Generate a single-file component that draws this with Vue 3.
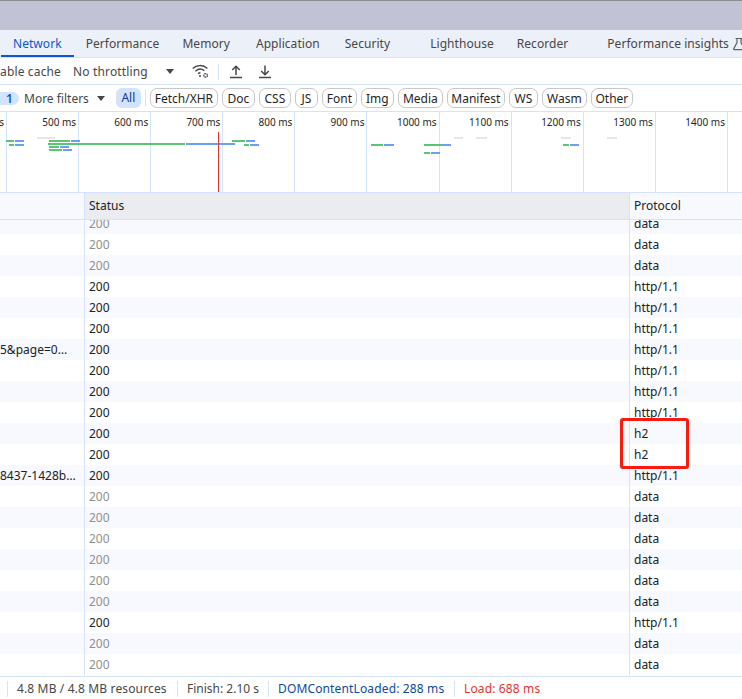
<template>
  <div class="devtools">
    <div class="titlebar"></div>

    <div class="tabs">
      <div v-for="t in tabs" :key="t.name" class="tab" :class="{ active: t.active }" :style="{ marginLeft: t.gap + 'px' }">{{ t.name }}</div>
      <svg class="flask" width="14" height="14" viewBox="0 0 14 14" fill="none" stroke="#5f6368" stroke-width="1.2">
        <path d="M3.5 1.5h7M5 1.5v4L1.8 11.6c-.3.6.1 1.1.7 1.1h9c.6 0 1-.5.7-1.1L9 5.5v-4" />
      </svg>
    </div>

    <div class="toolbar">
      <span class="cache">able cache</span>
      <span class="throttle">No throttling</span>
      <span class="caret caret-a"></span>
      <svg class="wifi" width="17" height="15" viewBox="0 0 17 15" fill="none" stroke="#474747" stroke-width="1.4">
        <path d="M.8 4.6C4.8 .6 11.2 .6 15.4 4.4" />
        <path d="M3.4 7.2c2.6-2.4 6.2-2.6 9-.6" />
        <path d="M6 9.6c.8-.6 1.6-.9 2.4-.9" />
        <circle cx="8" cy="12" r="1" fill="#474747" stroke="none" />
        <circle cx="13.6" cy="11.4" r="1.8" stroke-width="1.3" stroke-dasharray="1.6 .5" />
      </svg>
      <span class="sep"></span>
      <svg class="up" width="14" height="14" viewBox="0 0 14 14" fill="none" stroke="#474747" stroke-width="1.5">
        <path d="M7 10V1.5M3.2 5 7 1.2 10.8 5M1 12.6h12" />
      </svg>
      <svg class="down" width="14" height="14" viewBox="0 0 14 14" fill="none" stroke="#474747" stroke-width="1.5">
        <path d="M7 .6v9M3.2 6 7 9.8 10.8 6M1 12.6h12" />
      </svg>
    </div>

    <div class="filters">
      <span class="count">1</span>
      <span class="more">More filters</span>
      <span class="caret caret-b"></span>
      <span class="all">All</span>
      <span class="sep sep-f"></span>
      <span v-for="c in chips" :key="c.name" class="chip" :style="{ width: c.w + 'px' }">{{ c.name }}</span>
    </div>

    <div class="overview">
      <div class="ticks">
        <div class="tick first">s</div>
        <div v-for="l in ticks" :key="l" class="tick">{{ l }}</div>
      </div>
      <i v-for="(b, i) in bars" :key="i" class="bar" :style="{ left: b[0] + 'px', width: b[1] - b[0] + 'px', top: b[2] + 'px', background: colors[b[3]] }"></i>
      <i class="load-line"></i>
    </div>

    <div class="table-wrap">
      <div class="head">
        <div class="cell c-name"></div>
        <div class="cell c-status sorted">Status</div>
        <div class="cell c-proto">Protocol</div>
      </div>
      <div class="body">
        <div v-for="(r, i) in rows" :key="i" class="row" :class="{ odd: i % 2 === 0 }">
          <div class="cell c-name">{{ r.name }}</div>
          <div class="cell c-status" :class="{ muted: r.proto === 'data' }">200</div>
          <div class="cell c-proto">{{ r.proto }}</div>
        </div>
      </div>
      <div class="highlight"></div>
    </div>

    <div class="status">
      <span class="s-item wide" style="width: 170px">4.8 MB / 4.8 MB resources</span>
      <span class="s-item" style="width: 91px">Finish: 2.10 s</span>
      <span class="s-item wide dcl" style="width: 186px">DOMContentLoaded: 288 ms</span>
      <span class="s-item wide load">Load: 688 ms</span>
    </div>
  </div>
</template>

<script setup>
const tabs = [
  { name: 'Network', active: true, gap: 1 },
  { name: 'Performance', gap: 0 },
  { name: 'Memory', gap: -1 },
  { name: 'Application', gap: 2 },
  { name: 'Security', gap: 1 },
  { name: 'Lighthouse', gap: 16 },
  { name: 'Recorder', gap: -1 },
  { name: 'Performance insights', gap: 15 },
]

const chips = [
  { name: 'Fetch/XHR', w: 68 },
  { name: 'Doc', w: 33 },
  { name: 'CSS', w: 32 },
  { name: 'JS', w: 23 },
  { name: 'Font', w: 35 },
  { name: 'Img', w: 33 },
  { name: 'Media', w: 45 },
  { name: 'Manifest', w: 58 },
  { name: 'WS', w: 29 },
  { name: 'Wasm', w: 45 },
  { name: 'Other', w: 42 },
]

const ticks = ['500 ms', '600 ms', '700 ms', '800 ms', '900 ms', '1000 ms', '1100 ms', '1200 ms', '1300 ms', '1400 ms']

const colors = { g: '#5cc573', b: '#6b9ff5', x: '#e6e6e6' }
// left, right, top inside the overview, colour
const bars = [
  [6, 14, 28, 'g'], [15, 24, 28, 'b'], [9, 14, 32, 'g'], [15, 24, 32, 'b'],
  [49, 70, 28, 'g'], [71, 80, 28, 'b'], [48, 185, 31, 'g'], [186, 235, 31, 'b'],
  [49, 59, 34, 'g'], [60, 69, 34, 'b'], [49, 62, 37, 'g'], [63, 72, 37, 'b'],
  [232, 245, 28, 'g'], [246, 255, 28, 'b'], [244, 249, 32, 'g'], [250, 259, 32, 'b'],
  [371, 383, 32, 'g'], [384, 394, 32, 'b'], [424, 441, 32, 'g'], [441, 451, 32, 'b'],
  [424, 430, 40, 'g'], [431, 440, 40, 'b'], [563, 569, 32, 'g'], [570, 579, 32, 'b'],
  [37, 55, 25, 'x'], [454, 463, 25, 'x'], [476, 487, 25, 'x'], [561, 571, 25, 'x'], [607, 617, 25, 'x'],
]

const proto = 'data data data http http http http http http http h2 h2 http data data data data data data http data data'.split(' ')
const rows = proto.map((p, i) => ({
  proto: p === 'http' ? 'http/1.1' : p,
  name: i === 6 ? '5&page=0…' : i === 12 ? '8437-1428b…' : '',
}))
</script>

<style>
html, body { margin: 0; overflow: hidden; background: #fff; }
</style>

<style scoped>
.devtools {
  position: relative;
  width: 742px;
  height: 699px;
  overflow: hidden;
  background: #fff;
  color: #202124;
  font: 12px/16px "Noto Sans", "Open Sans", sans-serif;
  white-space: nowrap;
  display: flex;
  flex-direction: column;
}
.titlebar {
  height: 30px;
  flex: none;
  background: #c1c2d4;
  border-top: 1px solid #8c8c92;
  box-sizing: border-box;
}
.tabs {
  flex: none;
  height: 28px;
  box-sizing: border-box;
  display: flex;
  background: #ebf0f9;
  border-bottom: 1px solid #d3e3fd;
  color: #474747;
  letter-spacing: .05px;
}
.tab {
  flex: none;
  padding: 0 12px;
  line-height: 27px;
  height: 27px;
  box-sizing: border-box;
}
.tab.active {
  color: #0b57d0;
  border-bottom: 2px solid #0b57d0;
}
.flask { margin: 7px 0 0 -9px; flex: none; }
.toolbar {
  flex: none;
  height: 27px;
  box-sizing: border-box;
  display: flex;
  align-items: center;
  padding-top: 1px;
  border-bottom: 1px solid #d3e3fd;
  color: #474747;
  letter-spacing: .15px;
}
.throttle { margin-left: 12px; }
.caret {
  width: 0;
  height: 0;
  border: 4px solid transparent;
  border-top: 5px solid #474747;
  border-bottom: 0;
}
.caret-a { margin-left: 18px; }
.wifi { margin-left: 18px; flex: none; }
.sep { width: 1px; height: 16px; background: #d3e3fd; margin-left: 9px; }
.up { margin-left: 10px; flex: none; }
.down { margin-left: 15px; flex: none; }
.filters {
  flex: none;
  height: 27px;
  box-sizing: border-box;
  display: flex;
  align-items: center;
  border-bottom: 1px solid #d3e3fd;
  color: #474747;
}
.count {
  width: 19px;
  height: 13px;
  line-height: 13px;
  background: #d3e3fd;
  border-radius: 0 7px 7px 0;
  text-align: center;
  color: #0b57d0;
  font-weight: 600;
}
.more { margin-left: 5px; line-height: 18px; padding-top: 1px; }
.caret-b { margin-left: 8px; }
.all {
  margin-left: 11px;
  width: 25px;
  height: 20px;
  line-height: 20px;
  text-align: center;
  background: #d3e3fd;
  border-radius: 6px;
  color: #0b3a8a;
}
.sep-f { margin: 0 4px 0 4px; }
.chip {
  height: 20px;
  margin-right: 4px;
  box-sizing: border-box;
  border: 1px solid #c7c7c7;
  border-radius: 7px;
  line-height: 19px;
  text-align: center;
  color: #1f1f1f;
  flex: none;
}
.overview {
  position: relative;
  flex: none;
  height: 81px;
  box-sizing: border-box;
  border-bottom: 1px solid #d3e3fd;
}
.ticks { display: flex; height: 80px; }
.tick {
  width: 72.1px;
  flex: none;
  box-sizing: border-box;
  border-right: 1px solid #d3e3fd;
  text-align: right;
  padding: 2px 2px 0 0;
  font-size: 10px;
  line-height: 16px;
  color: #1f1f1f;
}
.tick.first { width: 7px; padding-right: 2px; overflow: hidden; direction: rtl; }
.bar { position: absolute; height: 2px; }
.load-line {
  position: absolute;
  left: 218px;
  top: 20px;
  width: 1px;
  height: 60px;
  background: #e3342b;
}
.table-wrap {
  position: relative;
  flex: none;
  height: 483px;
  overflow: hidden;
  border-bottom: 1px solid #d3e3fd;
}
.head {
  position: relative;
  z-index: 1;
  display: flex;
  height: 27px;
  box-sizing: border-box;
  border-bottom: 1px solid #d3e3fd;
  background: #f8f9fe;
}
.cell {
  box-sizing: border-box;
  padding-left: 4px;
  overflow: hidden;
  flex: none;
}
.c-name { width: 85px; border-right: 1px solid #d3e3fd; padding-left: 0; }
.c-status { width: 545px; border-right: 1px solid #d3e3fd; }
.c-proto { flex: 1; }
.head .cell { line-height: 26px; }
.sorted { background: #ebecf0; }
.body { margin-top: -7px; }
.row { display: flex; height: 21px; }
.row .cell { line-height: 21px; }
.row.odd { background: #f8f9fe; }
.muted { color: #8f8f8f; }
.highlight {
  position: absolute;
  left: 620px;
  top: 225px;
  width: 69px;
  height: 51px;
  box-sizing: border-box;
  border: 3px solid #fb1a10;
  border-radius: 3px;
}
.status {
  flex: 1;
  display: flex;
  align-items: center;
  padding: 1px 0 0 7px;
  color: #474747;
}
.s-item {
  box-sizing: border-box;
  border-left: 1px solid #d3e3fd;
  padding-left: 9px;
  height: 16px;
  line-height: 16px;
  flex: none;
}
.wide { letter-spacing: .14px; }
.dcl { color: #0b4a9e; }
.load { color: #e3342b; }
</style>
